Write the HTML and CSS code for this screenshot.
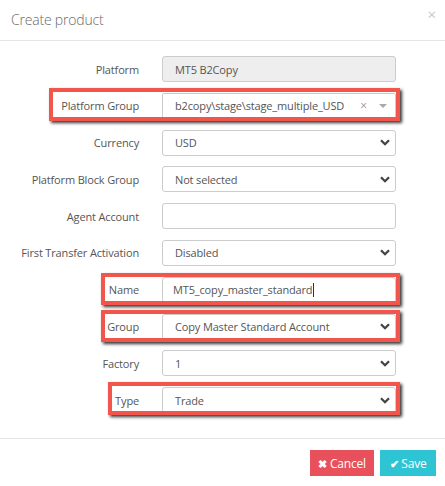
FILE: index.html
```html
<!DOCTYPE html>
<html>
<head>
<meta charset="utf-8">
<link rel="stylesheet" href="styles.css">
</head>
<body>
<div class="modal">
  <div class="modal-header">
    <h4 class="title">Create product</h4>
    <span class="close">&times;</span>
  </div>
  <div class="modal-body">
    <div class="form">
      <label>Platform</label>
      <div class="control disabled">MT5 B2Copy</div>

      <label>Platform Group</label>
      <div class="control s2">
        <span class="val">b2copy\stage\stage_multiple_USD</span>
        <span class="s2-clear">&times;</span>
        <span class="s2-arrow"></span>
      </div>

      <label>Currency</label>
      <div class="control sel"><span class="val">USD</span><svg class="chev" viewBox="0 0 10 7"><path d="M1 1.2 L5 5.2 L9 1.2"/></svg></div>

      <label>Platform Block Group</label>
      <div class="control sel"><span class="val">Not selected</span><svg class="chev" viewBox="0 0 10 7"><path d="M1 1.2 L5 5.2 L9 1.2"/></svg></div>

      <label>Agent Account</label>
      <div class="control"></div>

      <label>First Transfer Activation</label>
      <div class="control sel"><span class="val">Disabled</span><svg class="chev" viewBox="0 0 10 7"><path d="M1 1.2 L5 5.2 L9 1.2"/></svg></div>

      <label>Name</label>
      <div class="control text"><span class="val">MT5_copy_master_standard</span><span class="caret"></span></div>

      <label>Group</label>
      <div class="control sel"><span class="val">Copy Master Standard Account</span><svg class="chev" viewBox="0 0 10 7"><path d="M1 1.2 L5 5.2 L9 1.2"/></svg></div>

      <label>Factory</label>
      <div class="control sel"><span class="val">1</span><svg class="chev" viewBox="0 0 10 7"><path d="M1 1.2 L5 5.2 L9 1.2"/></svg></div>

      <label>Type</label>
      <div class="control sel"><span class="val">Trade</span><svg class="chev" viewBox="0 0 10 7"><path d="M1 1.2 L5 5.2 L9 1.2"/></svg></div>
    </div>
  </div>
  <div class="modal-footer">
    <button class="btn cancel"><span class="ico">&#10006;</span>Cancel</button>
    <button class="btn save"><span class="ico">&#10004;</span>Save</button>
  </div>

  <div class="mark m-pgroup"></div>
  <div class="mark m-name"></div>
  <div class="mark m-group"></div>
  <div class="mark m-type"></div>
</div>
</body>
</html>
```

FILE: styles.css
```css
html, body {
  margin: 0;
  padding: 0;
  background: #fff;
}
body {
  font-family: "Open Sans", "Liberation Sans", sans-serif;
  font-size: 11px;
  letter-spacing: -0.15px;
  color: #555;
}
.modal {
  position: relative;
  width: 445px;
  height: 486px;
  background: #fff;
  overflow: hidden;
}
.modal-header {
  height: 41px;
  border-bottom: 1px solid #e5e5e5;
  display: flex;
  align-items: center;
  justify-content: space-between;
  padding: 0 9px 2px 11px;
  box-sizing: border-box;
}
.title {
  margin: 0;
  font-size: 14px;
  font-weight: 300;
  color: #6a6a6a;
  letter-spacing: -0.2px;
}
.close {
  font-size: 15px;
  color: #c8c8c8;
  line-height: 1;
  margin-top: -10px;
}
.modal-body {
  padding: 15px 0 0 0;
  height: 398px;
  box-sizing: border-box;
  border-bottom: 1px solid #e5e5e5;
}
.form {
  display: grid;
  grid-template-columns: 139px 234px;
  column-gap: 23px;
  row-gap: 10.8px;
  grid-auto-rows: 26px;
}
.form label {
  text-align: right;
  white-space: nowrap;
  align-self: center;
  color: #555;
}
.control {
  box-sizing: border-box;
  height: 26px;
  border: 1px solid #ccc;
  border-radius: 3px;
  display: flex;
  align-items: center;
  padding: 0 5px 0 12px;
  color: #555;
  background: #fff;
}
.control .val {
  flex: 1;
  white-space: nowrap;
  overflow: hidden;
}
.control.disabled {
  background: #eee;
}
.control.text {
  padding-left: 10px;
}
.caret {
  display: none;
}
.control.text .val {
  flex: 0 0 auto;
}
.control.text .caret {
  display: block;
  width: 1px;
  height: 14px;
  background: #333;
  margin-left: 1px;
}
.chev {
  width: 10px;
  height: 7px;
  fill: none;
  stroke: #444;
  stroke-width: 2.3;
}
.s2 {
  border-radius: 2px;
  padding-right: 8px;
}
.s2-clear {
  color: #999;
  font-size: 12px;
  margin-right: 12px;
}
.s2-arrow {
  width: 0;
  height: 0;
  border-left: 4px solid transparent;
  border-right: 4px solid transparent;
  border-top: 4px solid #aaa;
}
.modal-footer {
  display: flex;
  justify-content: flex-end;
  gap: 6px;
  padding: 11px 9px 0 0;
}
.btn {
  height: 26px;
  border: none;
  border-radius: 0;
  color: #fff;
  font-family: "Open Sans", "Liberation Sans", sans-serif;
  font-size: 12px;
  letter-spacing: -0.2px;
  padding: 0 8px;
  display: flex;
  align-items: center;
  gap: 3px;
}
.btn .ico {
  font-size: 11px;
  font-weight: 700;
}
.cancel {
  background: #e8505b;
  width: 64px;
  justify-content: center;
}
.save {
  background: #2ec4d3;
  width: 56px;
  justify-content: center;
}
.mark {
  position: absolute;
  box-sizing: border-box;
  border: 4px solid #f2554b;
  box-shadow: 2px 2px 3px rgba(0, 0, 0, 0.8);
  pointer-events: none;
}
.m-pgroup { left: 49px; top: 88px; width: 351px; height: 33px; }
.m-name { left: 101px; top: 273px; width: 299px; height: 32px; }
.m-group { left: 101px; top: 310px; width: 299px; height: 32px; }
.m-type { left: 108px; top: 382px; width: 292px; height: 33px; }
```
